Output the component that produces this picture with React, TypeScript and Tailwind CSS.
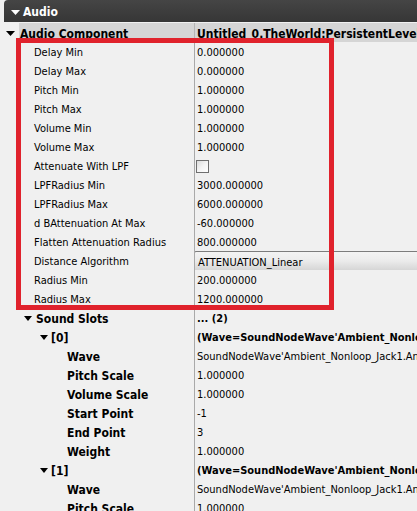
import React from 'react'

type Row = {
  label: string
  value?: React.ReactNode
  depth: number // label indent in px
  bold?: boolean
  toggle?: number // x of the expand arrow
  valueBold?: boolean
}

const font = { fontFamily: '"DejaVu Sans Condensed", "Liberation Sans", sans-serif' }

function Arrow({ color = '#000', w = 9, h = 5 }: { color?: string; w?: number; h?: number }) {
  return (
    <svg width={w} height={h} viewBox={`0 0 ${w} ${h}`} className="shrink-0">
      <polygon points={`0,0 ${w},0 ${w / 2},${h}`} fill={color} />
    </svg>
  )
}

const rows: Row[] = [
  { label: 'Delay Min', value: '0.000000', depth: 34 },
  { label: 'Delay Max', value: '0.000000', depth: 34 },
  { label: 'Pitch Min', value: '1.000000', depth: 34 },
  { label: 'Pitch Max', value: '1.000000', depth: 34 },
  { label: 'Volume Min', value: '1.000000', depth: 34 },
  { label: 'Volume Max', value: '1.000000', depth: 34 },
  { label: 'Attenuate With LPF', value: 'checkbox', depth: 34 },
  { label: 'LPFRadius Min', value: '3000.000000', depth: 34 },
  { label: 'LPFRadius Max', value: '6000.000000', depth: 34 },
  { label: 'd BAttenuation At Max', value: '-60.000000', depth: 34 },
  { label: 'Flatten Attenuation Radius', value: '800.000000', depth: 34 },
  { label: 'Distance Algorithm', value: 'combo', depth: 34 },
  { label: 'Radius Min', value: '200.000000', depth: 34 },
  { label: 'Radius Max', value: '1200.000000', depth: 34 },
  { label: 'Sound Slots', value: '... (2)', depth: 36, bold: true, toggle: 24, valueBold: true },
  { label: '[0]', value: "(Wave=SoundNodeWave'Ambient_Nonloop_Jack1.AnimSound')", depth: 51, bold: true, toggle: 40, valueBold: true },
  { label: 'Wave', value: "SoundNodeWave'Ambient_Nonloop_Jack1.AnimSound'", depth: 67, bold: true },
  { label: 'Pitch Scale', value: '1.000000', depth: 67, bold: true },
  { label: 'Volume Scale', value: '1.000000', depth: 67, bold: true },
  { label: 'Start Point', value: '-1', depth: 67, bold: true },
  { label: 'End Point', value: '3', depth: 67, bold: true },
  { label: 'Weight', value: '1.000000', depth: 67, bold: true },
  { label: '[1]', value: "(Wave=SoundNodeWave'Ambient_Nonloop_Jack1.AnimSound')", depth: 51, bold: true, toggle: 40, valueBold: true },
  { label: 'Wave', value: "SoundNodeWave'Ambient_Nonloop_Jack1.AnimSound'", depth: 67, bold: true },
  { label: 'Pitch Scale', value: '1.000000', depth: 67, bold: true },
]

function Value({ row }: { row: Row }) {
  if (row.value === 'checkbox') {
    return (
      <div className="h-[19px] flex items-center pl-[1px] pt-[2px]">
        <div className="w-[13px] h-[13px] border border-[#6f6f6f] bg-gradient-to-br from-[#dcdcdc] via-[#f4f4f4] to-white" />
      </div>
    )
  }
  if (row.value === 'combo') {
    return (
      <div className="h-[19px] -ml-px border-t border-l border-[#7c7c7c] rounded-tl-[2px] bg-gradient-to-b from-[#f3f3f3] via-[#ebebeb] to-[#d6d6d6] flex items-center pl-[3px] pt-[2px]">
        ATTENUATION_Linear
      </div>
    )
  }
  return (
    <div className={`h-[19px] flex items-center pl-[2px] pt-[2px] ${row.valueBold ? 'font-bold' : ''}`}>
      {row.value}
    </div>
  )
}

export default function App() {
  return (
    <div
      className="relative w-[417px] h-[511px] overflow-hidden bg-[#f0f0f0] text-[11px] text-black leading-none"
      style={font}
    >
      {/* Category header */}
      <div className="h-[23px] pl-[4px]">
        <div className="h-[22px] rounded-tl-[4px] bg-gradient-to-b from-[#454545] to-[#363636] flex items-center pl-[7px] pt-[2px] gap-[3px] text-white font-bold text-[12px]">
          <Arrow color="#fff" />
          Audio
        </div>
      </div>

      {/* Audio Component row */}
      <div className="flex h-[19px]">
        <div className="w-[19px] shrink-0 flex items-center pl-[6px] pt-[1px]">
          <Arrow />
        </div>
        <div className="flex-1 flex bg-[#d5d5d5] font-bold text-[12px] whitespace-nowrap overflow-hidden">
          <div className="w-[175px] shrink-0 flex items-center pl-[1px] pt-[2px]">Audio Component</div>
          <div className="flex-1 border-l border-[#b5b5b5] flex items-center pl-[2px] pt-[2px]">
            Untitled_0.TheWorld:PersistentLevel.AudioComponent_0
          </div>
        </div>
      </div>

      {/* Properties */}
      {rows.map((row, i) => (
        <div key={i} className="flex h-[19px] whitespace-nowrap">
          <div
            className={`w-[194px] shrink-0 flex items-center pt-[2px] relative ${row.bold ? 'font-bold text-[12px]' : ''}`}
            style={{ paddingLeft: row.depth }}
          >
            {row.toggle !== undefined && (
              <div className="absolute top-[8px]" style={{ left: row.toggle }}>
                <Arrow w={8} h={5} />
              </div>
            )}
            {row.label}
          </div>
          <div className="flex-1 border-l border-[#a9a9a9] overflow-hidden">
            <Value row={row} />
          </div>
        </div>
      ))}

      {/* Red highlight annotation */}
      <div className="absolute left-[16px] top-[38px] w-[318px] h-[272px] border-[5px] border-[#e0222c] pointer-events-none" />
    </div>
  )
}
